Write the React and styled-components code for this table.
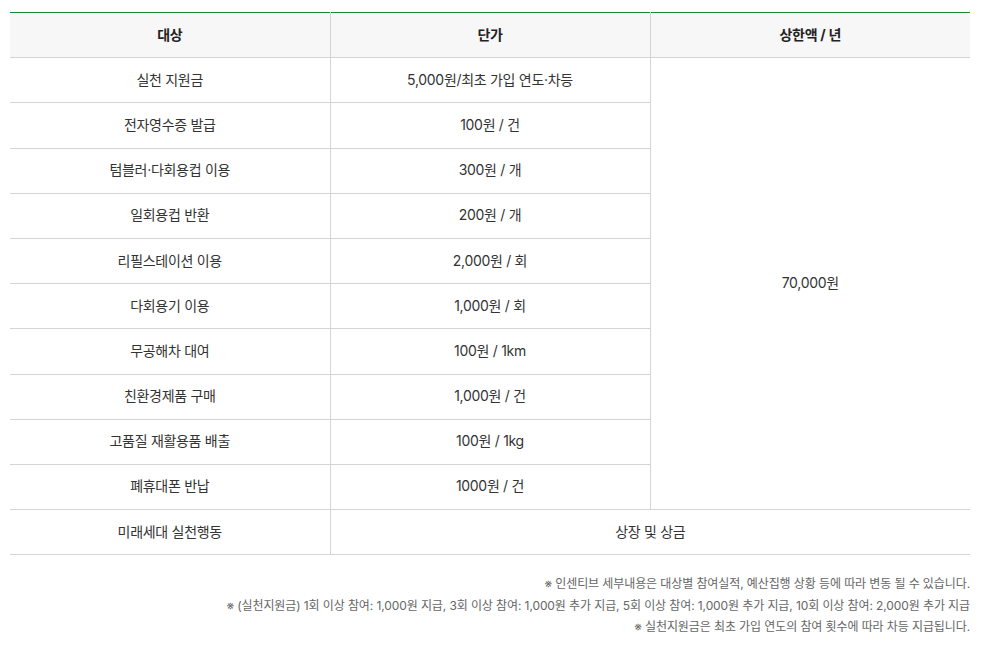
import React from "react";
import styled, { createGlobalStyle } from "styled-components";

const rows = [
  ["실천 지원금", "5,000원/최초 가입 연도·차등"],
  ["전자영수증 발급", "100원 / 건"],
  ["텀블러·다회용컵 이용", "300원 / 개"],
  ["일회용컵 반환", "200원 / 개"],
  ["리필스테이션 이용", "2,000원 / 회"],
  ["다회용기 이용", "1,000원 / 회"],
  ["무공해차 대여", "100원 / 1km"],
  ["친환경제품 구매", "1,000원 / 건"],
  ["고품질 재활용품 배출", "100원 / 1kg"],
  ["폐휴대폰 반납", "1000원 / 건"],
];

const notes = [
  "※ 인센티브 세부내용은 대상별 참여실적, 예산집행 상황 등에 따라 변동 될 수 있습니다.",
  "※ (실천지원금) 1회 이상 참여: 1,000원 지급, 3회 이상 참여: 1,000원 추가 지급, 5회 이상 참여: 1,000원 추가 지급, 10회 이상 참여: 2,000원 추가 지급",
  "※ 실천지원금은 최초 가입 연도의 참여 횟수에 따라 차등 지급됩니다.",
];

export default function App() {
  return (
    <>
      <GlobalStyle />
      <Wrap>
        <Table>
          <colgroup>
            <col width="320" />
            <col width="320" />
            <col width="320" />
          </colgroup>
          <thead>
            <tr>
              <Th>대상</Th>
              <Th>단가</Th>
              <Th $last>상한액 / 년</Th>
            </tr>
          </thead>
          <tbody>
            {rows.map((row, i) => (
              <tr key={row[0]}>
                <Td>{row[0]}</Td>
                <Td>{row[1]}</Td>
                {i === 0 && (
                  <Td rowSpan={rows.length} $last>
                    70,000원
                  </Td>
                )}
              </tr>
            ))}
            <tr>
              <Td>미래세대 실천행동</Td>
              <Td colSpan={2} $last>
                상장 및 상금
              </Td>
            </tr>
          </tbody>
        </Table>
        <Notes>
          {notes.map((n) => (
            <li key={n}>{n}</li>
          ))}
        </Notes>
      </Wrap>
    </>
  );
}

const GlobalStyle = createGlobalStyle`
  body {
    margin: 0;
    background: #fff;
    font-family: Inter, "Noto Sans CJK KR", sans-serif;
    color: #333;
  }
`;

const Wrap = styled.div`
  padding: 12px 17px 0 10px;
`;

const Table = styled.table`
  width: 960px;
  border-collapse: collapse;
  table-layout: fixed;
  border-top: 1px solid #1b8a2c;

  tr {
    height: 45.2px;
  }
`;

const Th = styled.th`
  background: #f7f7f7;
  font-size: 14px;
  font-weight: 700;
  color: #222;
  text-align: center;
  border-bottom: 1px solid #d4d4d4;
  border-right: ${(p) => (p.$last ? "none" : "1px solid #d4d4d4")};
  padding: 0 0 3px;
  letter-spacing: -0.3px;
`;

const Td = styled.td`
  font-size: 14px;
  color: #333;
  text-align: center;
  border-bottom: 1px solid #d4d4d4;
  border-right: ${(p) => (p.$last ? "none" : "1px solid #d4d4d4")};
  padding: 0 0 3px;
  letter-spacing: -0.3px;
`;

const Notes = styled.ul`
  list-style: none;
  margin: 18px 0 0;
  padding: 0;
  width: 960px;
  text-align: right;

  li {
    font-size: 12px;
    line-height: 21.5px;
    color: #666;
    letter-spacing: -0.1px;
  }
`;
